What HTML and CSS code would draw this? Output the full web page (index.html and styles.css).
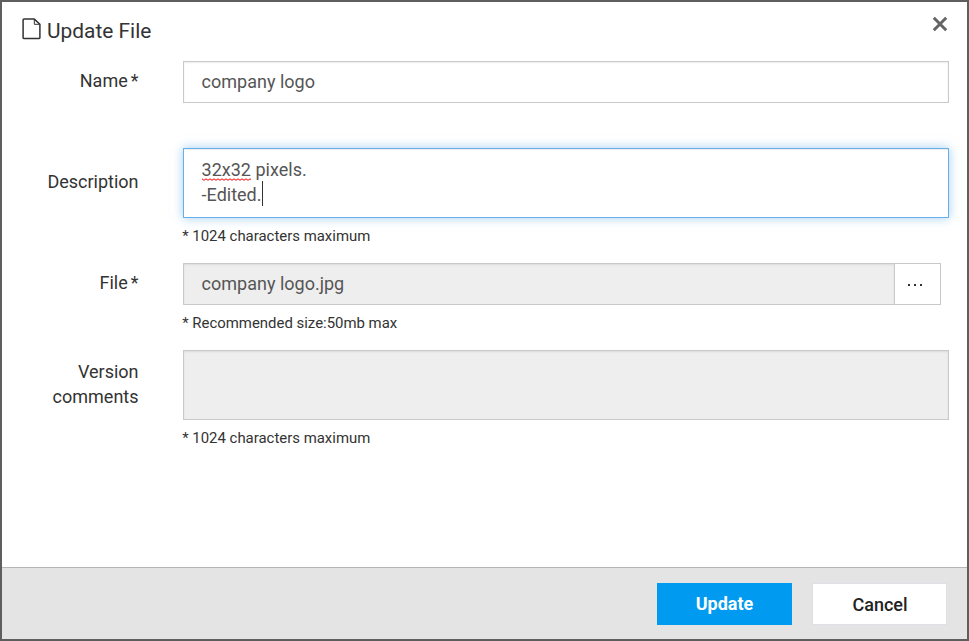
FILE: index.html
```html
<!DOCTYPE html>
<html lang="en">
<head>
<meta charset="utf-8">
<title>Update File</title>
<link rel="stylesheet" href="styles.css">
</head>
<body>
<div class="dialog">
  <header class="header">
    <svg class="file-icon" width="20" height="22" viewBox="0 0 20 22" fill="none" stroke="#333" stroke-width="1.5" stroke-linejoin="round"><path d="M2 1.1h10.3l5.6 5.2v13.4q0 .7-.7.7H1.8q-.7 0-.7-.7V1.8q0-.7.9-.7z"/><path d="M12.3 1.3v5h5.4" stroke-width="1"/></svg>
    <h1 class="title">Update File</h1>
    <button class="close" aria-label="Close"><svg width="16" height="16" viewBox="0 0 16 16" stroke="#646464" stroke-width="3"><path d="M1.8 1.8l12.4 12.4M14.2 1.8L1.8 14.2"/></svg></button>
  </header>
  <main class="form">
    <div class="row row-name">
      <div class="label">Name<span class="star">*</span></div>
      <div class="field"><div class="input">company logo</div></div>
    </div>
    <div class="row row-description">
      <div class="label">Description</div>
      <div class="field">
        <div class="input area focused"><span class="misspelled">32x32<svg class="squiggle" width="49" height="3"><defs><pattern id="wave" width="4" height="3" patternUnits="userSpaceOnUse"><path d="M-1 1.5L0 .8L2 2.3L4 .8L5 1.5" fill="none" stroke="#f00" stroke-width="1"/></pattern></defs><rect width="49" height="3" fill="url(#wave)"/></svg></span> pixels.<br><span class="line">-Edited.<span class="caret"></span></span></div>
        <div class="help">* 1024 characters maximum</div>
      </div>
    </div>
    <div class="row row-file">
      <div class="label">File<span class="star">*</span></div>
      <div class="field">
        <div class="picker"><div class="input disabled">company logo.jpg</div><button class="browse" aria-label="Browse"><i></i><i></i><i></i></button></div>
        <div class="help">* Recommended size:50mb max</div>
      </div>
    </div>
    <div class="row row-comments">
      <div class="label">Version<br>comments</div>
      <div class="field">
        <div class="input area disabled"></div>
        <div class="help">* 1024 characters maximum</div>
      </div>
    </div>
  </main>
  <footer class="footer">
    <button class="btn primary">Update</button>
    <button class="btn">Cancel</button>
  </footer>
</div>
</body>
</html>
```

FILE: styles.css
```css
* { box-sizing: border-box; }
body { margin: 0; font: 18px/25px Roboto, "Liberation Sans", sans-serif; color: #333; }
button { font: inherit; border: 0; padding: 0; background: none; }
.dialog { height: 641px; border: 2px solid #5e5e5e; background: #fff; display: flex; flex-direction: column; }
.header { display: flex; height: 59px; padding: 14px 19px 0 19px; align-items: flex-start; }
.file-icon { margin: 2px 4.4px 0 0.6px; }
.title { margin: 0; padding-left: 1px; font-size: 20.9px; line-height: 30px; font-weight: 400; flex: 1; }
.close { width: 16px; height: 16px; margin-top: 0; }
.close svg { display: block; }
.form { flex: 1; }
.row { display: flex; padding: 0 18px 0 16px; }
.row-name { height: 87px; }
.row-description { height: 115px; }
.row-file { height: 87px; }
.label { width: 120.5px; margin-right: 44.5px; text-align: right; padding-top: 7px; }
.star { margin-left: 3px; }
.row-description .label { padding-top: 21px; }
.row-comments .label { padding-top: 9px; }
.field { flex: 1; min-width: 0; }
.input { height: 42px; padding: 7px 17.6px; border: 1px solid #c9c9c9; background: #fff; color: #555; box-shadow: inset 0 1px 2px rgba(0, 0, 0, .08); }
.area { height: 70px; padding-top: 8px; }
.disabled { background: #eee; }
.focused { border-color: #66afe9; box-shadow: inset 0 1px 1px rgba(0, 0, 0, .075), 0 0 10px rgba(102, 175, 233, .6); }
.misspelled, .line { position: relative; display: inline-block; }
.squiggle { position: absolute; left: 0.4px; top: 21px; }
.caret { position: absolute; left: 100%; top: -1px; width: 1px; height: 25px; margin-left: 0.6px; background: #333; }
.help { font-size: 14.93px; line-height: 20px; margin: 8px 0 0 -0.8px; }
.picker { display: flex; width: 758px; }
.picker .input { flex: 1; }
.browse { width: 47px; height: 42px; margin-left: -1px; border: 1px solid #c9c9c9; background: #fff; display: flex; justify-content: center; align-items: center; gap: 4px; padding-right: 6px; }
.browse i { width: 2px; height: 2px; background: #333; margin-top: 1px; }
.footer { height: 72px; border-top: 1px solid #b5b5b5; background: #e4e4e4; display: flex; justify-content: flex-end; gap: 20px; padding: 15px 20px 0 0; }
.btn { width: 135px; height: 42px; background: #fff; border: 1px solid #dde0e5; color: #222; font-weight: 500; padding-left: 1px; }
.primary { background: #009af0; border-color: #009af0; color: #fff; font-weight: 700; padding: 0 0 2px; }
```
